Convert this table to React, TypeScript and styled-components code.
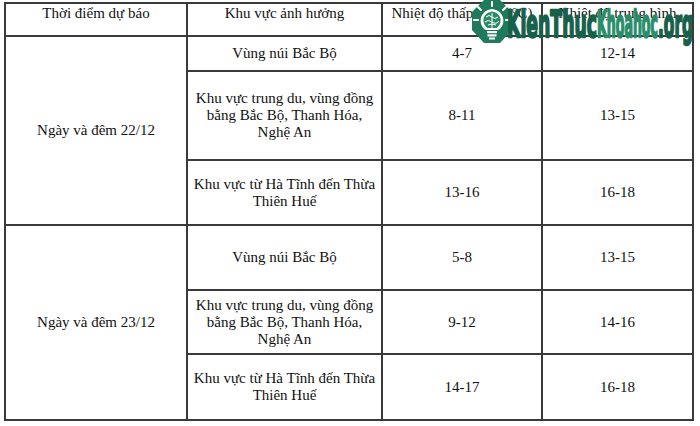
import React from 'react';
import styled, { createGlobalStyle } from 'styled-components';

const GlobalStyle = createGlobalStyle`
  html, body { margin: 0; padding: 0; background: #fff; }
  body { font-family: "Liberation Serif", "Times New Roman", serif; }
`;

// --- Styled Components ---
const Page = styled.div`
  position: relative; width: 700px; height: 426px; padding: 2px 0 0 4px; box-sizing: border-box;
  background: #fff; overflow: hidden;
`;
const Grid = styled.div`
  display: grid;
  grid-template-columns: 180px 193px 158px 149px;
  grid-template-rows: 31px 33px 87px 63px 63px 62px 64px;
  gap: 2px; padding: 2px; width: fit-content;
  background: #3a3a3a;
`;
const Cell = styled.div<{ $head?: boolean; $span?: number }>`
  background: #fff; color: #111;
  font-size: 15px; line-height: 17px; text-align: center; white-space: nowrap;
  display: flex; justify-content: center;
  align-items: ${({ $head }) => ($head ? 'flex-start' : 'center')};
  padding-top: ${({ $head }) => ($head ? '1px' : '0')};
  ${({ $span }) => ($span ? `grid-row: span ${$span};` : '')}
`;
const Watermark = styled.svg`
  position: absolute; left: 470px; top: 0; width: 230px; height: 60px; overflow: visible;
`;
const LogoWord = styled.text`
  font-family: "DejaVu Sans", sans-serif; font-weight: 700; font-size: 38px;
  stroke-width: 2.4px; stroke-linejoin: round;
`;

// --- Data ---
interface Row { area: string[]; low: string; avg: string; }
interface Group { day: string; rows: Row[]; }

const groups: Group[] = [
  {
    day: 'Ngày và đêm 22/12',
    rows: [
      { area: ['Vùng núi Bắc Bộ'], low: '4-7', avg: '12-14' },
      { area: ['Khu vực trung du, vùng đồng', 'bằng Bắc Bộ, Thanh Hóa,', 'Nghệ An'], low: '8-11', avg: '13-15' },
      { area: ['Khu vực từ Hà Tĩnh đến Thừa', 'Thiên Huế'], low: '13-16', avg: '16-18' },
    ],
  },
  {
    day: 'Ngày và đêm 23/12',
    rows: [
      { area: ['Vùng núi Bắc Bộ'], low: '5-8', avg: '13-15' },
      { area: ['Khu vực trung du, vùng đồng', 'bằng Bắc Bộ, Thanh Hóa,', 'Nghệ An'], low: '9-12', avg: '14-16' },
      { area: ['Khu vực từ Hà Tĩnh đến Thừa', 'Thiên Huế'], low: '14-17', avg: '16-18' },
    ],
  },
];

// squeezed wordmark parts: [text, x, width on screen, colour]
const words: [string, number, number, string][] = [
  ['KienThuc', 37, 90, '#17604a'],
  ['Khoahoc', 127, 61, '#2a8d69'],
  ['.org', 188, 35, '#17604a'],
];
const SQUEEZE = 0.42;

const Logo = () => (
  <Watermark viewBox="0 0 230 60">
    <polygon points="14,0 30,0 42,12 42,30 30,43 14,43 2,30 2,12" fill="#1f7a5c" />
    {/* rays */}
    <g stroke="#fff" strokeWidth="2" strokeLinecap="round">
      <line x1="22" y1="2" x2="22" y2="6" />
      <line x1="8" y1="7" x2="11" y2="10" />
      <line x1="36" y1="7" x2="33" y2="10" />
      <line x1="4" y1="20" x2="8" y2="20" />
      <line x1="40" y1="20" x2="36" y2="20" />
    </g>
    {/* bulb */}
    <path d="M16 30 C8 26 8 11 22 9 C36 11 36 26 28 30 Z" fill="#fff" />
    <path d="M17.5 28 C11.5 24 11.5 13 22 11.5 C32.5 13 32.5 24 26.5 28 Z" fill="#2b8a68" />
    <g stroke="#fff" strokeWidth="1" fill="none">
      <path d="M16 17 Q19 14 22 17 T28 17" />
      <path d="M15 22 Q18 19 22 22 T29 21" />
      <path d="M22 13 L22 28" />
      <path d="M18 25 Q22 23 26 25" />
    </g>
    <rect x="17" y="31" width="10" height="2.2" fill="#fff" />
    <rect x="17.5" y="34.3" width="9" height="2.2" fill="#fff" />
    <rect x="19" y="37.5" width="6" height="2" fill="#fff" />
    {words.map(([t, x, w, c]) => (
      <LogoWord
        key={t}
        transform={`translate(${x} 37) scale(${SQUEEZE} 1)`}
        x="0"
        y="0"
        textLength={w / SQUEEZE}
        lengthAdjust="spacingAndGlyphs"
        fill={c}
        stroke={c}
      >
        {t}
      </LogoWord>
    ))}
  </Watermark>
);

const App = () => {
  return (
    <Page>
      <GlobalStyle />
      <Grid>
        <Cell $head>Thời điểm dự báo</Cell>
        <Cell $head>Khu vực ảnh hưởng</Cell>
        <Cell $head>Nhiệt độ thấp nhất (°C)</Cell>
        <Cell $head>Nhiệt độ trung bình</Cell>
        {groups.map(group => (
          <React.Fragment key={group.day}>
            <Cell $span={group.rows.length}>{group.day}</Cell>
            {group.rows.map((row, i) => (
              <React.Fragment key={i}>
                <Cell>
                  <div>
                    {row.area.map((line, j) => (
                      <div key={j}>{line}</div>
                    ))}
                  </div>
                </Cell>
                <Cell>{row.low}</Cell>
                <Cell>{row.avg}</Cell>
              </React.Fragment>
            ))}
          </React.Fragment>
        ))}
      </Grid>
      <Logo />
    </Page>
  );
};

export default App;
